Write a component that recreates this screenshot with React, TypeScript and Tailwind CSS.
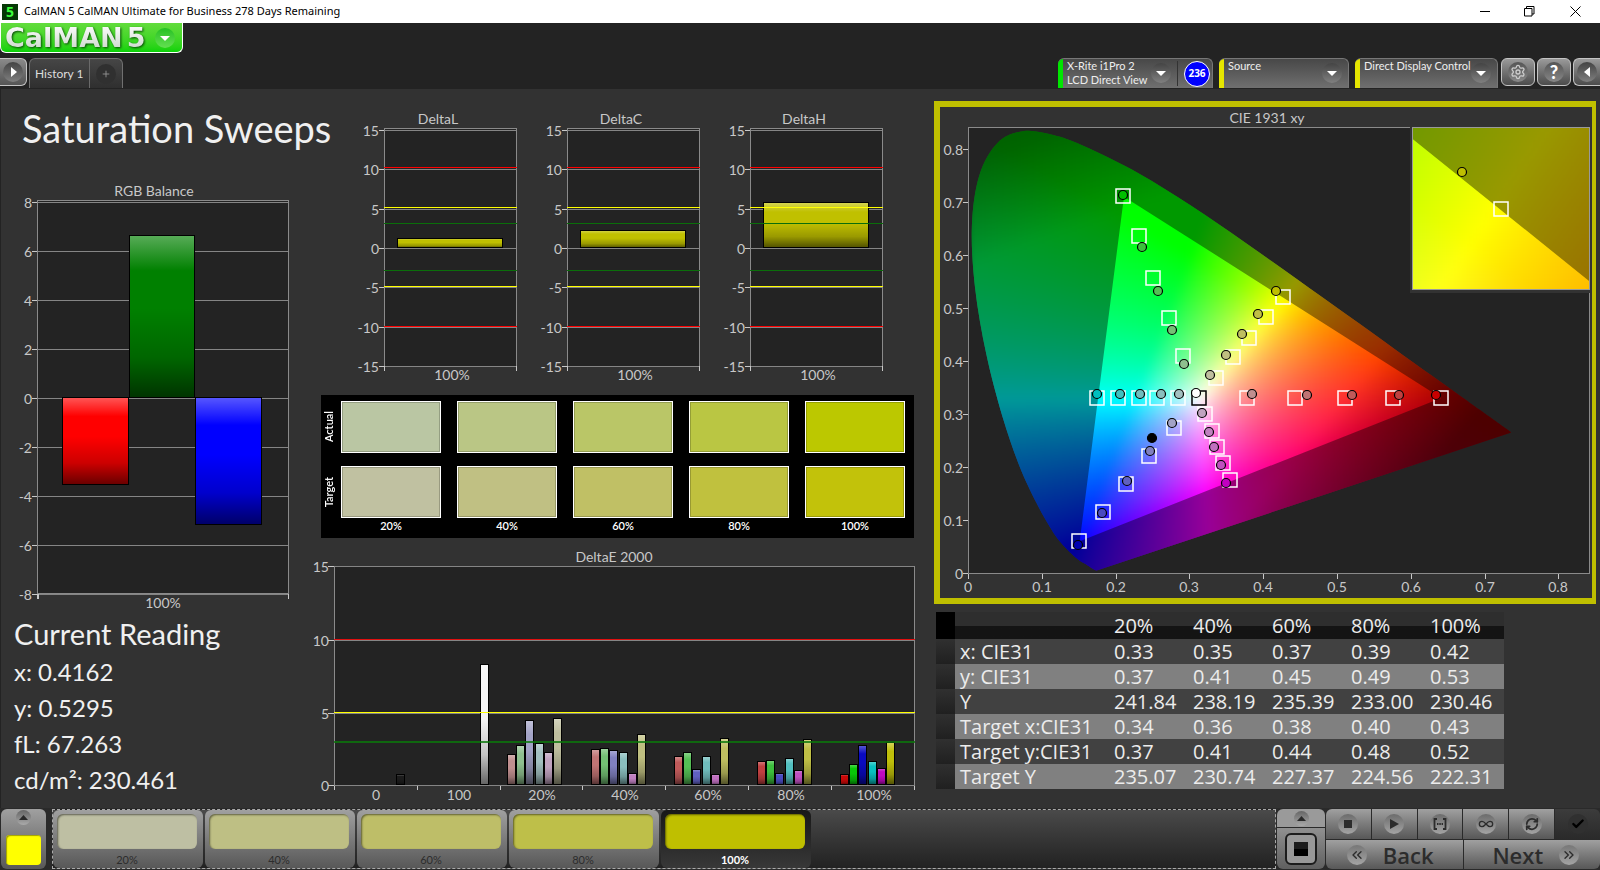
import React, { useMemo, useState } from 'react'
import {
  Check,
  ChevronsLeft,
  ChevronsRight,
  Infinity as InfinityIcon,
  Plus,
  RefreshCw,
  Settings,
} from 'lucide-react'

// ─── Data ─────────────────────────────────────────────────────────────────────
type Pt = [number, number]

const levels = ['20%', '40%', '60%', '80%', '100%']

const actualColors = ['bg-[#bac6a3]', 'bg-[#bac685]', 'bg-[#bac667]', 'bg-[#bac643]', 'bg-[#bcc800]']
const targetColors = ['bg-[#c0c1a1]', 'bg-[#c0c083]', 'bg-[#c0c065]', 'bg-[#c0c13e]', 'bg-[#c2c20a]']
const stepColors = ['bg-[#bebfa3]', 'bg-[#bebf84]', 'bg-[#bebe68]', 'bg-[#bebf49]', 'bg-[#bfbf00]']

const tableRows = [
  { label: 'x: CIE31', values: ['0.33', '0.35', '0.37', '0.39', '0.42'] },
  { label: 'y: CIE31', values: ['0.37', '0.41', '0.45', '0.49', '0.53'] },
  { label: 'Y', values: ['241.84', '238.19', '235.39', '233.00', '230.46'] },
  { label: 'Target x:CIE31', values: ['0.34', '0.36', '0.38', '0.40', '0.43'] },
  { label: 'Target y:CIE31', values: ['0.37', '0.41', '0.44', '0.48', '0.52'] },
  { label: 'Target Y', values: ['235.07', '230.74', '227.37', '224.56', '222.31'] },
]

const readings = ['x: 0.4162', 'y: 0.5295', 'fL: 67.263', 'cd/m²: 230.461']

// bars of the DeltaE chart: x of the first bar, then top y and colour of each
const deltaEGroups: { x: number; bars: [number, string][] }[] = [
  { x: 396, bars: [[774, '#1c1c1c']] },
  { x: 480, bars: [[664, '#f4f4f4']] },
  { x: 507, bars: [[754, '#c08f8f'], [745, '#8fc08f'], [720, '#a3a3c6'], [743, '#a3c0c0'], [752, '#c0a3c0'], [718, '#bfbf9f']] },
  { x: 591, bars: [[749, '#c07474'], [748, '#74c074'], [750, '#8080c0'], [752, '#8abebe'], [773, '#c080c0'], [734, '#bfbf80']] },
  { x: 674, bars: [[756, '#c05a5a'], [752, '#55bf55'], [769, '#6060c0'], [756, '#70bdbd'], [774, '#c070c0'], [738, '#bfbf60']] },
  { x: 757, bars: [[761, '#c04040'], [760, '#3dbf3d'], [773, '#4a4ac0'], [758, '#52bfbf'], [770, '#bf50bf'], [739, '#bfbf45']] },
  { x: 840, bars: [[774, '#c80808'], [764, '#08c808'], [745, '#0a0ac0'], [761, '#08bfbf'], [768, '#c008c0'], [742, '#bfbf0a']] },
]

// ─── Shared chart parts ───────────────────────────────────────────────────────
function GlossDefs({ id }: { id: string }) {
  return (
    <defs>
      <linearGradient id={id} x1="0" y1="0" x2="0" y2="1">
        <stop offset="0" stopColor="#fff" stopOpacity="0.35" />
        <stop offset="0.22" stopColor="#fff" stopOpacity="0" />
        <stop offset="0.45" stopColor="#000" stopOpacity="0" />
        <stop offset="0.75" stopColor="#000" stopOpacity="0.2" />
        <stop offset="1" stopColor="#000" stopOpacity="0.6" />
      </linearGradient>
    </defs>
  )
}

function Bar({ x, y, w, h, fill, gloss }: { x: number; y: number; w: number; h: number; fill: string; gloss: string }) {
  return (
    <g>
      <rect x={x} y={y} width={w} height={h} fill={fill} />
      <rect x={x} y={y} width={w} height={h} fill={`url(#${gloss})`} />
      <rect x={x + 0.5} y={y + 0.5} width={w - 1} height={h - 1} fill="none" stroke="#000" />
    </g>
  )
}

const HLine = ({ x1, x2, y, color }: { x1: number; x2: number; y: number; color: string }) => (
  <rect x={x1} y={y} width={x2 - x1} height={1} fill={color} />
)

function Plot({ x, y, w, h }: { x: number; y: number; w: number; h: number }) {
  return <rect x={x + 0.5} y={y + 0.5} width={w} height={h} fill="#232323" stroke="#8a8a8a" />
}

// ─── RGB balance ──────────────────────────────────────────────────────────────
function RgbBalance() {
  const ticks = [8, 6, 4, 2, 0, -2, -4, -6, -8]
  return (
    <svg viewBox="0 180 310 435" className="block w-full h-auto" fontFamily="Lato, sans-serif" fontSize="14" fill="#c8c8c8">
      <GlossDefs id="gloss-rgb" />
      <text x="154" y="196" textAnchor="middle">RGB Balance</text>
      <Plot x={37} y={200} w={251} h={393} />
      {ticks.map((t) => {
        const y = Math.round(398 - t * 24.5)
        return (
          <g key={t}>
            <HLine x1={38} x2={288} y={y} color="#858585" />
            <HLine x1={32} x2={37} y={y} color="#c8c8c8" />
            <text x="32" y={y + 6} textAnchor="end">{t}</text>
          </g>
        )
      })}
      <rect x="37" y="594" width="2" height="5" fill="#c8c8c8" />
      <rect x="288" y="594" width="1" height="5" fill="#c8c8c8" />
      <Bar x={62} y={397} w={67} h={88} fill="#ff0000" gloss="gloss-rgb" />
      <Bar x={129} y={235} w={66} h={163} fill="#008000" gloss="gloss-rgb" />
      <Bar x={195} y={397} w={67} h={128} fill="#0000ff" gloss="gloss-rgb" />
      <text x="163" y="608" textAnchor="middle">100%</text>
    </svg>
  )
}

// ─── DeltaL / DeltaC / DeltaH ─────────────────────────────────────────────────
function DeltaChart({ title, top }: { title: string; top: number }) {
  const gloss = `gloss-${title}`
  const limits: [number, string][] = [
    [167, '#ff0000'],
    [207, '#ffff00'],
    [223, '#0a6e0a'],
    [270, '#0a6e0a'],
    [286, '#ffff00'],
    [326, '#ff0000'],
  ]
  return (
    <svg viewBox="0 108 183 287" className="block w-1/3 h-auto" fontFamily="Lato, sans-serif" fontSize="14" fill="#c8c8c8">
      <GlossDefs id={gloss} />
      <text x="91" y="124" textAnchor="middle">{title}</text>
      <Plot x={37} y={128} w={132} h={238} />
      {[15, 10, 5, 0, -5, -10, -15].map((t) => {
        const y = Math.round(248 - t * 7.87)
        return (
          <g key={t}>
            <HLine x1={38} x2={169} y={y} color="#858585" />
            <HLine x1={32} x2={37} y={y} color="#c8c8c8" />
            <text x="32" y={y + 6} textAnchor="end">{t}</text>
          </g>
        )
      })}
      <rect x="37" y="366" width="1" height="5" fill="#c8c8c8" />
      <rect x="169" y="366" width="1" height="5" fill="#c8c8c8" />
      <Bar x={50} y={top} w={106} h={248 - top} fill="#c0c000" gloss={gloss} />
      {limits.map(([y, color]) => (
        <HLine key={y} x1={37} x2={170} y={y} color={color} />
      ))}
      <text x="105" y="380" textAnchor="middle">100%</text>
    </svg>
  )
}

// ─── Actual / target swatches ─────────────────────────────────────────────────
function SwatchRow({ label, colors }: { label: string; colors: string[] }) {
  return (
    <div className="flex items-center">
      <div className="flex w-5 shrink-0 justify-start">
        <span className="rotate-180 text-[11px] leading-4 font-semibold [writing-mode:vertical-rl]">{label}</span>
      </div>
      <div className="grid flex-1 grid-cols-5 gap-4">
        {colors.map((c) => (
          <div key={c} className={`h-[52px] border border-white shadow-[inset_0_0_0_1px_rgba(0,0,0,0.2)] ${c}`} />
        ))}
      </div>
    </div>
  )
}

function Swatches() {
  return (
    <div className="ml-[11px] bg-black pt-[6px] pr-[9px] pb-1 text-white">
      <SwatchRow label="Actual" colors={actualColors} />
      <div className="h-[13px]" />
      <SwatchRow label="Target" colors={targetColors} />
      <div className="ml-5 grid grid-cols-5 gap-4 text-center text-[11px] leading-4 font-semibold">
        {levels.map((l) => (
          <span key={l}>{l}</span>
        ))}
      </div>
    </div>
  )
}

// ─── DeltaE 2000 ──────────────────────────────────────────────────────────────
function DeltaE() {
  const yLabels: [number, number][] = [[15, 566], [10, 640], [5, 713], [0, 785]]
  const xLabels = ['0', '100', ...levels]
  return (
    <svg viewBox="310 546 604 262" className="block w-full h-auto overflow-visible" fontFamily="Lato, sans-serif" fontSize="14" fill="#c8c8c8">
      <GlossDefs id="gloss-e" />
      <text x="614" y="562" textAnchor="middle">DeltaE 2000</text>
      <Plot x={334} y={566} w={580} h={219} />
      {yLabels.map(([t, y]) => (
        <g key={t}>
          <HLine x1={335} x2={914} y={y} color="#858585" />
          <HLine x1={328} x2={334} y={y} color="#c8c8c8" />
          <text x="329" y={y + 6} textAnchor="end">{t}</text>
        </g>
      ))}
      {deltaEGroups.map((g) =>
        g.bars.map(([top, color], i) => (
          <Bar key={`${g.x}-${i}`} x={g.x + Math.round(i * 9.2)} y={top} w={9} h={785 - top} fill={color} gloss="gloss-e" />
        )),
      )}
      <HLine x1={334} x2={915} y={639} color="#e01010" />
      <rect x={334} y={712} width={581} height={1} fill="#ffff00" />
      <rect x={334} y={741} width={581} height={2} fill="#0a780a" opacity={0.8} />
      {xLabels.map((l, i) => (
        <text key={l} x={376 + i * 83} y="800" textAnchor="middle">{l}</text>
      ))}
      {Array.from({ length: 8 }, (_, i) => (
        <rect key={i} x={Math.round(334 + i * 82.8)} y={786} width={1} height={4} fill="#c8c8c8" />
      ))}
    </svg>
  )
}

// ─── CIE 1931 xy ──────────────────────────────────────────────────────────────
const locus: Pt[] = [
  [0.1741, 0.005], [0.1714, 0.0051], [0.1644, 0.0109], [0.1566, 0.0177], [0.144, 0.0297], [0.1241, 0.0578],
  [0.1096, 0.0868], [0.0913, 0.1327], [0.0687, 0.2007], [0.0454, 0.295], [0.0235, 0.4127], [0.0082, 0.5384],
  [0.0039, 0.6548], [0.0139, 0.7502], [0.0389, 0.812], [0.0743, 0.8338], [0.1142, 0.8262], [0.1547, 0.8059],
  [0.2296, 0.7543], [0.3016, 0.6923], [0.3731, 0.6245], [0.4441, 0.5547], [0.5125, 0.4866], [0.5752, 0.4242],
  [0.627, 0.3725], [0.6658, 0.334], [0.6915, 0.3083], [0.719, 0.2809], [0.7347, 0.2653],
]
const gamut: Pt[] = [[0.64, 0.33], [0.21, 0.71], [0.15, 0.06]]

const clamp = (v: number) => Math.max(0, Math.min(1, v))

// chromaticity to a display colour at full brightness, dimmed towards far red and far green
function xyColor(x: number, yIn: number) {
  const y = Math.max(yIn, 0.004)
  const X = x / y
  const Z = (1 - x - y) / y
  const lin = [
    3.2406 * X - 1.5372 - 0.4986 * Z,
    -0.9689 * X + 1.8758 + 0.0415 * Z,
    0.0557 * X - 0.204 + 1.057 * Z,
  ].map((v) => Math.max(0, v))
  const max = Math.max(...lin, 0.0001)
  const farRed = clamp((x - 0.6 * (y - 0.25) - 0.46) / 0.2)
  const farGreen = clamp((y - 0.5 * x - 0.58) / 0.2)
  const dim = (1 - 0.5 * farRed) * (1 - 0.35 * farGreen)
  const [r, g, b] = lin.map((v) => Math.round(255 * dim * Math.pow(v / max, 0.8)))
  return `rgb(${r},${g},${b})`
}

const px = (x: number) => 969 + x * 738
const py = (y: number) => 573 - y * 530

function smoothPath(pts: Pt[]) {
  let d = `M${pts[0][0]} ${pts[0][1]}`
  for (let i = 0; i < pts.length - 1; i++) {
    const p0 = pts[i - 1] ?? pts[i]
    const p1 = pts[i]
    const p2 = pts[i + 1]
    const p3 = pts[i + 2] ?? p2
    const c1 = [p1[0] + (p2[0] - p0[0]) / 6, p1[1] + (p2[1] - p0[1]) / 6]
    const c2 = [p2[0] - (p3[0] - p1[0]) / 6, p2[1] - (p3[1] - p1[1]) / 6]
    d += `C${c1.join(' ')} ${c2.join(' ')} ${p2.join(' ')}`
  }
  return d + 'Z'
}

const locusPath = smoothPath(locus.map(([x, y]): Pt => [px(x), py(y)]))
const gamutPath = 'M' + gamut.map(([x, y]) => `${px(x)} ${py(y)}`).join('L') + 'Z'

// the inset is a window of 0.054 x 0.054 around the current target
const ix = (x: number) => 1501 + ((x - 0.4287) / 0.054) * 178
const iy = (y: number) => 209 - ((y - 0.5171) / 0.054) * 162
const insetGamut = 'M' + gamut.map(([x, y]) => `${ix(x)} ${iy(y)}`).join('L') + 'Z'

const targets: Pt[] = [
  [1123, 196], [1139, 236], [1153, 278], [1169, 318], [1183, 356],
  [1283, 297], [1266, 317], [1249, 338], [1233, 357], [1216, 378],
  [1097, 398], [1118, 398], [1139, 398], [1157, 398], [1178, 398],
  [1247, 398], [1295, 398], [1345, 398], [1393, 398], [1441, 398],
  [1174, 428], [1149, 456], [1126, 484], [1103, 512], [1079, 541],
  [1205, 414], [1212, 431], [1217, 447], [1223, 463], [1230, 480],
]

const measured: [number, number, string][] = [
  [1123, 195, '#00c000'], [1142, 247, '#3dbf3d'], [1158, 291, '#55bf55'], [1172, 330, '#74c074'], [1184, 364, '#8fc08f'],
  [1276, 291, '#bfbf00'], [1258, 314, '#bfbf45'], [1242, 334, '#bfbf60'], [1226, 355, '#bfbf80'], [1210, 375, '#bfbf9f'],
  [1097, 394, '#00bfbf'], [1120, 394, '#40bfbf'], [1140, 394, '#70bdbd'], [1161, 394, '#8abebe'], [1179, 394, '#a3c0c0'],
  [1252, 394, '#c08f8f'], [1307, 395, '#c07474'], [1352, 395, '#c05a5a'], [1399, 395, '#c04040'], [1436, 395, '#c80000'],
  [1172, 423, '#a3a3c6'], [1150, 451, '#8080c0'], [1127, 481, '#6060c0'], [1102, 513, '#4a4ac0'], [1078, 545, '#0000b0'],
  [1202, 413, '#c0a3c0'], [1209, 432, '#c080c0'], [1214, 447, '#c070c0'], [1221, 465, '#bf50bf'], [1226, 483, '#c000c0'],
  [1152, 438, '#000000'], [1196, 393, '#ffffff'],
]

function CieChart() {
  const mesh = useMemo(() => {
    const cells: React.ReactNode[] = []
    for (let cx = 966; cx < 1520; cx += 6) {
      for (let cy = 122; cy < 582; cy += 6) {
        const x = (cx + 3 - 969) / 738
        const y = (573 - cy - 3) / 530
        if (x + y > 1.06 || y < 0.47 * x - 0.14) continue
        cells.push(<rect key={`${cx}-${cy}`} x={cx} y={cy} width={6} height={6} fill={xyColor(x, y)} />)
      }
    }
    return cells
  }, [])

  const insetMesh = useMemo(() => {
    const cells: React.ReactNode[] = []
    for (let cx = 1400; cx < 1602; cx += 8) {
      for (let cy = 116; cy < 302; cy += 8) {
        const x = 0.4287 + ((cx + 4 - 1501) / 178) * 0.054
        const y = 0.5171 - ((cy + 4 - 209) / 162) * 0.054
        cells.push(<rect key={`${cx}-${cy}`} x={cx} y={cy} width={8} height={8} fill={xyColor(x, y)} />)
      }
    }
    return cells
  }, [])

  const steps = [0, 1, 2, 3, 4, 5, 6, 7, 8]

  return (
    <svg viewBox="940 107 652 491" className="block w-full h-auto" fontFamily="Lato, sans-serif" fontSize="14" fill="#c8c8c8">
      <defs>
        <clipPath id="locus"><path d={locusPath} /></clipPath>
        <clipPath id="inset"><rect x="1412" y="128" width="178" height="162" /></clipPath>
        <filter id="soft" x="0" y="0" width="1" height="1" colorInterpolationFilters="sRGB"><feGaussianBlur stdDeviation="4" /></filter>
      </defs>
      <text x="1267" y="123" textAnchor="middle">CIE 1931 xy</text>
      <Plot x={968} y={127} w={621} h={446} />
      <g clipPath="url(#locus)">
        <g filter="url(#soft)" shapeRendering="crispEdges">{mesh}</g>
        <path d={`M940 100H1600V600H940Z${gamutPath}`} fill="#000" fillOpacity="0.4" fillRule="evenodd" />
      </g>
      {steps.map((s) => {
        const label = s === 0 ? '0' : `0.${s}`
        return (
          <g key={s}>
            <HLine x1={963} x2={968} y={Math.round(573 - s * 53)} color="#c8c8c8" />
            <text x="963" y={Math.round(573 - s * 53) + 6} textAnchor="end">{label}</text>
            <rect x={Math.round(968 + s * 73.8)} y={574} width={1} height={5} fill="#c8c8c8" />
            <text x={Math.round(968 + s * 73.8)} y="592" textAnchor="middle">{label}</text>
          </g>
        )
      })}
      {targets.map(([x, y]) => (
        <rect key={`${x}-${y}`} x={x - 7} y={y - 7} width={14} height={14} fill="none" stroke="#fff" strokeWidth="1.5" />
      ))}
      <rect x={1192} y={391} width={14} height={14} fill="none" stroke="#000" strokeWidth="1.5" />
      {measured.map(([x, y, color]) => (
        <circle key={`${x}-${y}`} cx={x} cy={y} r={4.5} fill={color} stroke="#000" strokeWidth="1.2" />
      ))}

      {/* zoomed inset */}
      <rect x="1410" y="125" width="182" height="168" fill="#323232" />
      <g clipPath="url(#inset)">
        <g filter="url(#soft)" shapeRendering="crispEdges">{insetMesh}</g>
        <path d={`M1400 110H1600V300H1400Z${insetGamut}`} fill="#000" fillOpacity="0.4" fillRule="evenodd" />
      </g>
      <rect x="1412.5" y="127.5" width="177" height="162" fill="none" stroke="#9a9a9a" />
      <circle cx="1462" cy="172" r="4.5" fill="#bfbf00" stroke="#000" strokeWidth="1.2" />
      <rect x="1494" y="202" width="14" height="14" fill="none" stroke="#fff" strokeWidth="1.5" />
    </svg>
  )
}

// ─── Table ────────────────────────────────────────────────────────────────────
function ReadingsTable() {
  return (
    <table className="mt-2 ml-0.5 w-[568px] table-fixed border-collapse text-left font-['Open_Sans',sans-serif] text-xl leading-[25px] text-[#ececec]">
      <colgroup>
        <col className="w-[19px]" />
        <col className="w-[154px]" />
        <col span={5} />
      </colgroup>
      <thead>
        <tr className="h-[27px] bg-linear-to-b from-[#2e2e2e] from-50% to-[#141414] to-50%">
          <th className="bg-black p-0" />
          <th className="p-0" />
          {levels.map((l) => (
            <th key={l} className="p-0 pl-[5px] font-normal">{l}</th>
          ))}
        </tr>
      </thead>
      <tbody>
        {tableRows.map((row) => (
          <tr key={row.label} className="h-[25px] bg-[#414141] even:bg-[#808080]">
            <td className="bg-linear-to-b from-[#303030] to-[#202020] p-0" />
            <th scope="row" className="p-0 pl-[5px] font-normal whitespace-nowrap">{row.label}</th>
            {row.values.map((v, i) => (
              <td key={i} className="p-0 pl-[5px]">{v}</td>
            ))}
          </tr>
        ))}
      </tbody>
    </table>
  )
}

// ─── Header ───────────────────────────────────────────────────────────────────
function TitleBar() {
  return (
    <div className="flex h-[23px] items-center bg-white pl-0.5 font-['Noto_Sans',sans-serif] text-black">
      <span className="flex size-4 items-center justify-center bg-[#063806] text-sm leading-4 font-bold text-[#3cff3c]">5</span>
      <span className="ml-1.5 text-[11px]">CalMAN 5 CalMAN Ultimate for Business 278 Days Remaining</span>
      <div className="ml-auto flex">
        <button aria-label="Minimize" className="flex h-[23px] w-[46px] items-center justify-center">
          <svg width="11" height="11" stroke="#000"><path d="M0 5.5h10" /></svg>
        </button>
        <button aria-label="Restore" className="flex h-[23px] w-[46px] items-center justify-center pr-1">
          <svg width="11" height="11" fill="none" stroke="#000"><path d="M.5 2.5h7.5v7.5H.5zM2.5 2.5V.5h7.5v7.5H8" /></svg>
        </button>
        <button aria-label="Close" className="flex h-[23px] w-[46px] items-center justify-center pr-1">
          <svg width="11" height="11" stroke="#000"><path d="M.5.5l10 10M10.5.5l-10 10" /></svg>
        </button>
      </div>
    </div>
  )
}

function ArrowDot({ dir = 'down', className = '' }: { dir?: 'down' | 'left' | 'right'; className?: string }) {
  const paths = { down: 'M5 8h10l-5 5z', left: 'M13 5v10l-6-5z', right: 'M8 5v10l6-5z' }
  return (
    <span className={`flex size-5 shrink-0 items-center justify-center rounded-full bg-linear-to-b from-[#444] to-[#808080] ${className}`}>
      <svg width="20" height="20" fill="#fff"><path d={paths[dir]} /></svg>
    </span>
  )
}

function DeviceTab({ lines, stripe, className, children }: { lines: string[]; stripe: string; className: string; children?: React.ReactNode }) {
  return (
    <div className={`flex h-[30px] overflow-hidden rounded-t-md border-t border-r border-[#777] bg-linear-to-b from-[#484848] to-[#707070] ${className}`}>
      <button className="flex min-w-0 flex-1 items-start text-left">
        <span className={`h-full w-[5px] shrink-0 ${stripe}`} />
        <span className="ml-1 min-w-0 flex-1 text-[11px] leading-[14px] whitespace-nowrap text-[#eee]">
          {lines.map((l) => (
            <span key={l} className="block">{l}</span>
          ))}
        </span>
        <ArrowDot className="mt-1 mr-1.5" />
      </button>
      {children}
    </div>
  )
}

const toolButton =
  'flex h-7 shrink-0 items-center justify-center rounded-md border border-[#c4c4c4] bg-linear-to-b from-[#9a9a9a] to-[#4c4c4c]'

function Header() {
  return (
    <header className="bg-[#232323]">
      <button className="flex h-[30px] w-[183px] items-center overflow-hidden rounded-b-md border-r border-b border-l border-white bg-linear-to-b from-[#62dc3c] to-[#06d206] pl-1">
        <span className="flex bg-linear-to-b from-white to-[#c8d4c8] bg-clip-text font-['DejaVu_Sans',sans-serif] text-[27px] leading-7 font-bold text-transparent drop-shadow-[1px_1px_1px_rgba(0,60,0,0.9)]">
          CalMAN<span className="ml-1">5</span>
        </span>
        <span className="ml-2.5 flex size-5 shrink-0 items-center justify-center rounded-full bg-linear-to-b from-[#22c022] to-[#62e050]">
          <svg width="20" height="20" fill="#fff"><path d="M5 8h10l-5 5z" /></svg>
        </span>
      </button>
      <div className="flex items-start pt-[5px] pb-px">
        <button aria-label="Expand" className="flex h-7 w-[27px] items-center justify-center rounded-r-md border-y border-r border-[#c4c4c4] bg-linear-to-b from-[#8a8a8a] to-[#555]">
          <ArrowDot dir="right" />
        </button>
        <div className="ml-[2px] flex h-[30px] rounded-t-md border-x border-t border-[#707070] bg-linear-to-b from-[#464646] to-[#2f2f2f] text-xs text-[#ddd]">
          <button className="border-r border-[#6a6a6a] px-[5px]">History 1</button>
          <button aria-label="Add history" className="flex w-8 items-center justify-center">
            <span className="flex size-5 items-center justify-center rounded-full bg-[#303030]">
              <Plus className="size-2.5 text-[#9a9a9a]" />
            </span>
          </button>
        </div>
        <div className="ml-auto flex gap-1.5">
          <DeviceTab lines={['X-Rite i1Pro 2', 'LCD Direct View']} stripe="bg-[#00e600]" className="w-[155px]">
            <span className="my-0.5 w-px bg-[#333]" />
            <span className="mr-0.5 ml-1.5 flex size-[26px] items-center justify-center self-center rounded-full border border-white bg-[#0000ff] font-['Open_Sans',sans-serif] text-[10px] font-bold text-white">
              236
            </span>
          </DeviceTab>
          <DeviceTab lines={['Source']} stripe="bg-[#e6e600]" className="w-[130px]" />
          <DeviceTab lines={['Direct Display Control']} stripe="bg-[#e6e600]" className="w-[143px]" />
        </div>
        <div className="ml-[3px] flex gap-0.5">
          <button aria-label="Settings" className={`${toolButton} w-[34px]`}>
            <span className="flex size-5 items-center justify-center rounded-full bg-linear-to-b from-[#555] to-[#888]">
              <Settings className="size-4 text-[#ccc]" />
            </span>
          </button>
          <button aria-label="Help" className={`${toolButton} w-[34px]`}>
            <span className="flex size-5 items-center justify-center rounded-full bg-linear-to-b from-[#555] to-[#888] text-lg leading-5 font-black text-white">?</span>
          </button>
          <button aria-label="Collapse" className={`${toolButton} w-[27px] rounded-r-none border-r-0`}>
            <ArrowDot dir="left" />
          </button>
        </div>
      </div>
    </header>
  )
}

// ─── Footer ───────────────────────────────────────────────────────────────────
const metal = 'bg-linear-to-b from-[#a0a0a0] to-[#585858]'

function UpDot() {
  return (
    <span className="flex size-[15px] items-center justify-center rounded-full bg-linear-to-b from-[#666] to-[#aaa]">
      <svg width="9" height="5" fill="#2a2a2a"><path d="M0 5h9L4.5 0z" /></svg>
    </span>
  )
}

function Transport({ label, children, dark }: { label: string; children: React.ReactNode; dark?: boolean }) {
  return (
    <button
      aria-label={label}
      className={`flex h-[30px] flex-1 items-center justify-center ${dark ? 'bg-linear-to-b from-[#3c3c3c] to-[#2a2a2a]' : metal}`}
    >
      <span className={`flex size-5 items-center justify-center rounded-full ${dark ? 'bg-[#303030]' : 'bg-linear-to-b from-[#6c6c6c] to-[#a4a4a4]'}`}>
        {children}
      </span>
    </button>
  )
}

function Footer() {
  const [active, setActive] = useState(4)
  return (
    <footer className="flex h-[62px] bg-[#2a2a2a] pt-px pb-px pl-px">
      <button aria-label="Show pattern" className={`flex w-[45px] shrink-0 flex-col items-center rounded-md pt-px ${metal}`}>
        <UpDot />
        <span className="mt-2.5 h-[30px] w-[35px] rounded-sm bg-[#ffff00] shadow-[inset_1px_1px_1px_#a0a000]" />
      </button>
      <div className="ml-1.5 flex min-w-0 flex-1 gap-0.5 border border-dashed border-[#aaa] bg-linear-to-b from-[#4a4a4a] to-[#222]">
        {levels.map((l, i) => (
          <button
            key={l}
            onClick={() => setActive(i)}
            className={`flex w-[150px] flex-col items-center rounded-md pt-1 pr-0.5 text-[11px] leading-4 ${
              active === i ? 'bg-linear-to-b from-[#181818] to-[#383838] font-bold text-white' : `text-[#2c2c2c] ${metal}`
            }`}
          >
            <span className={`h-9 w-[140px] rounded-md shadow-[inset_1px_1px_2px_rgba(0,0,0,0.5)] ${stepColors[i]}`} />
            <span className="mt-[3px]">{l}</span>
          </button>
        ))}
      </div>
      <div className="ml-px flex w-12 shrink-0 flex-col gap-px">
        <button aria-label="Show meter" className="flex h-[18px] items-center justify-center rounded-t-md bg-[#9a9a9a]">
          <UpDot />
        </button>
        <button aria-label="Stop reading" className="flex flex-1 items-center justify-center rounded-b-md bg-linear-to-b from-[#909090] to-[#606060]">
          <span className="flex size-8 items-center justify-center rounded-md border-2 border-[#1c1c1c] bg-[#989898]">
            <span className="size-3.5 bg-linear-to-b from-[#1c1c1c] from-50% to-black to-50%" />
          </span>
        </button>
      </div>
      <div className="ml-px flex w-[274px] shrink-0 flex-col gap-px text-[#2c2c2c]">
        <div className="flex gap-px overflow-hidden rounded-t-md">
          <Transport label="Stop"><span className="size-2 bg-[#2c2c2c]" /></Transport>
          <Transport label="Play"><svg width="10" height="10" fill="#2c2c2c"><path d="M1 0v10l9-5z" /></svg></Transport>
          <Transport label="Read series">
            <svg width="14" height="12" fill="none" stroke="#2c2c2c" strokeWidth="1.8">
              <path d="M4 1H1.5v10H4M10 1h2.5v10H10" />
              <path d="M4 6h6" strokeDasharray="1.5 0.8" />
            </svg>
          </Transport>
          <Transport label="Continuous"><InfinityIcon className="size-4" /></Transport>
          <Transport label="Refresh"><RefreshCw className="size-3.5" strokeWidth={3} /></Transport>
          <Transport label="Accept" dark><Check className="size-3.5 text-black" strokeWidth={4} /></Transport>
        </div>
        <div className="flex flex-1 gap-px font-['Open_Sans',sans-serif] text-[22px] leading-7 font-semibold">
          <button className={`flex flex-1 items-center justify-center gap-4 rounded-bl-md pr-2 ${metal}`}>
            <span className="flex size-5 items-center justify-center rounded-full bg-linear-to-b from-[#777] to-[#a4a4a4]"><ChevronsLeft className="size-4" /></span>
            Back
          </button>
          <button className={`flex flex-1 items-center justify-center gap-4 rounded-br-md pl-2 ${metal}`}>
            Next
            <span className="flex size-5 items-center justify-center rounded-full bg-linear-to-b from-[#777] to-[#a4a4a4]"><ChevronsRight className="size-4" /></span>
          </button>
        </div>
      </div>
    </footer>
  )
}

// ─── Page ─────────────────────────────────────────────────────────────────────
export default function App() {
  return (
    <div className="flex min-h-screen flex-col bg-[#323232] font-[Lato,sans-serif]">
      <TitleBar />
      <Header />
      <main className="grid flex-1 grid-cols-[minmax(0,310fr)_minmax(0,604fr)_minmax(0,686fr)] shadow-[inset_1px_0_0_#232323]">
        <section>
          <h1 className="pt-[15px] pb-7 pl-[22px] text-[38px] leading-[48px] whitespace-nowrap text-[#f0f0f0]">Saturation Sweeps</h1>
          <RgbBalance />
          <div className="pl-3.5 text-[#f0f0f0]">
            <h2 className="pt-px pb-0.5 text-[29px] leading-9">Current Reading</h2>
            {readings.map((r) => (
              <p key={r} className="text-2xl leading-9">{r}</p>
            ))}
          </div>
        </section>
        <section className="pt-[19px]">
          <div className="flex pr-[18px] pl-[37px]">
            <DeltaChart title="DeltaL" top={238} />
            <DeltaChart title="DeltaC" top={230} />
            <DeltaChart title="DeltaH" top={202} />
          </div>
          <Swatches />
          <div className="pt-2">
            <DeltaE />
          </div>
        </section>
        <section className="pt-3 pr-1 pl-5">
          <div className="border-y-6 border-r-4 border-l-6 border-[#bfbf00]">
            <CieChart />
          </div>
          <ReadingsTable />
        </section>
      </main>
      <Footer />
    </div>
  )
}
